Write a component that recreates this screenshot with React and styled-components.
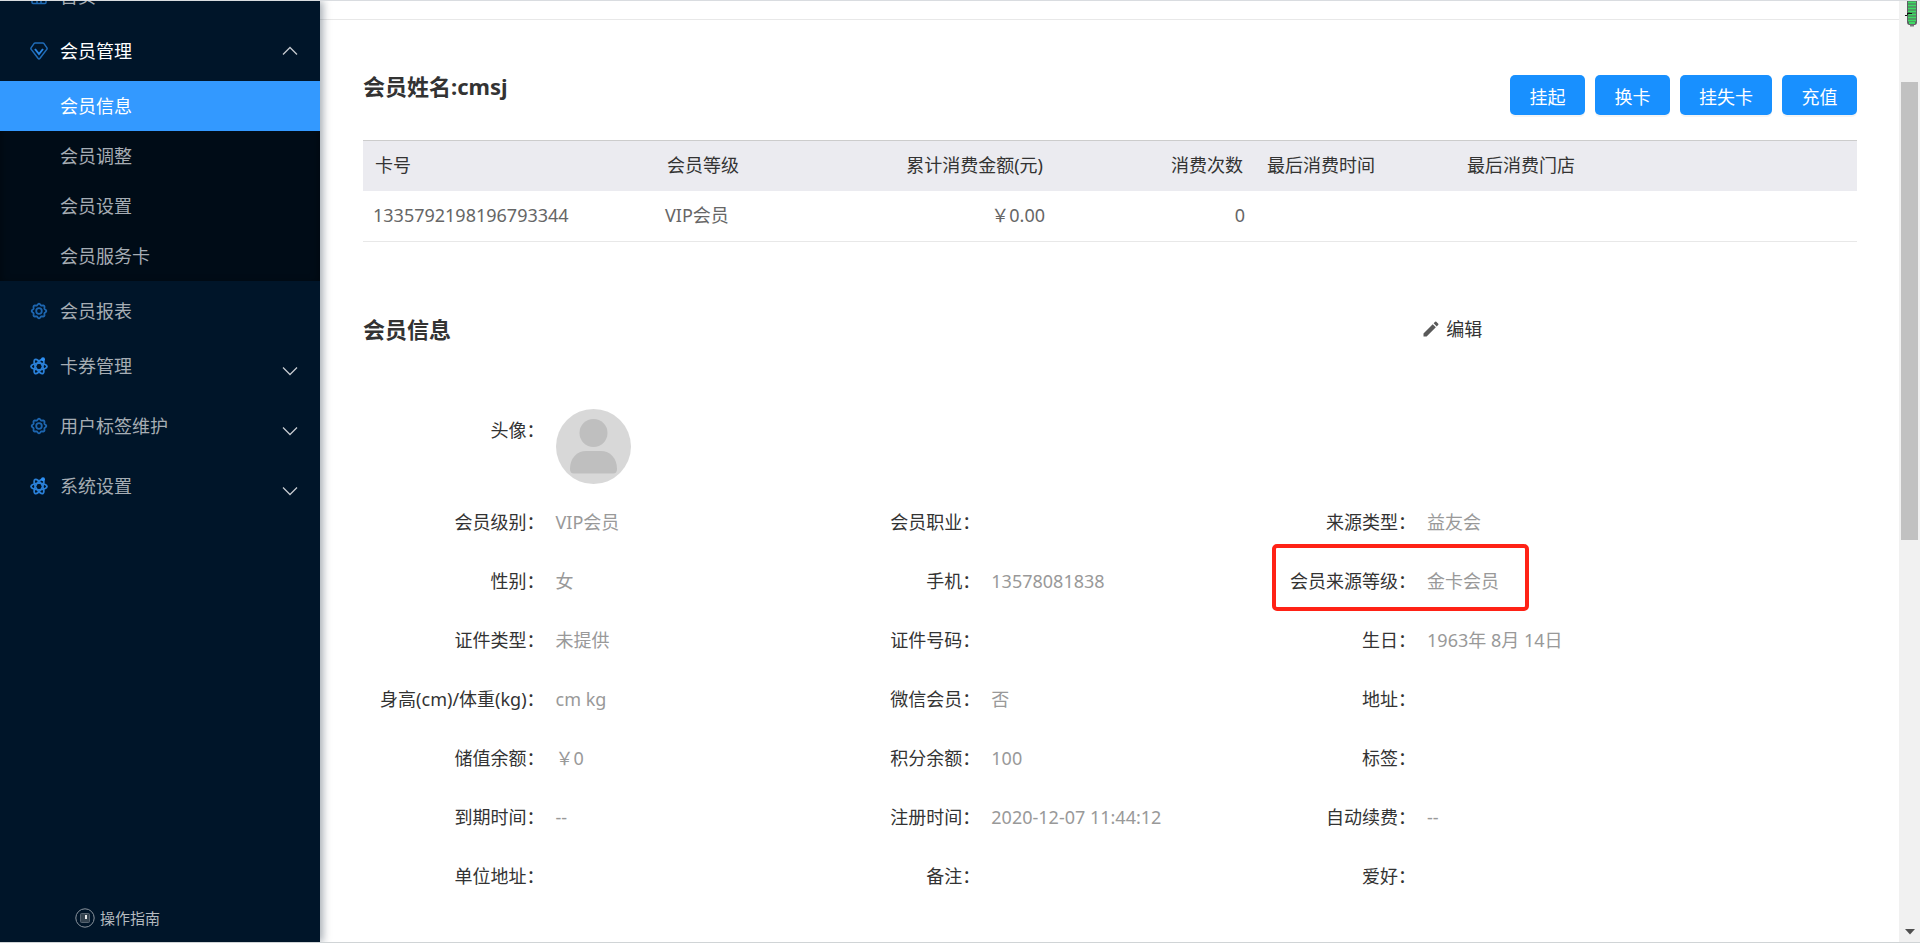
import React from "react";
import styled, { createGlobalStyle } from "styled-components";
import { MdEdit } from "react-icons/md";

const subMenu = ["会员信息", "会员调整", "会员设置", "会员服务卡"];

const cards = [
  {
    no: "1335792198196793344",
    level: "VIP会员",
    amount: "￥0.00",
    count: "0",
    time: "",
    store: "",
  },
];

const memberInfo = [
  { label: "会员级别", value: "VIP会员" },
  { label: "会员职业", value: "" },
  { label: "来源类型", value: "益友会" },
  { label: "性别", value: "女" },
  { label: "手机", value: "13578081838" },
  { label: "会员来源等级", value: "金卡会员", marked: true },
  { label: "证件类型", value: "未提供" },
  { label: "证件号码", value: "" },
  { label: "生日", value: "1963年 8月 14日" },
  { label: "身高(cm)/体重(kg)", value: "cm kg" },
  { label: "微信会员", value: "否" },
  { label: "地址", value: "" },
  { label: "储值余额", value: "￥0" },
  { label: "积分余额", value: "100" },
  { label: "标签", value: "" },
  { label: "到期时间", value: "--" },
  { label: "注册时间", value: "2020-12-07 11:44:12" },
  { label: "自动续费", value: "--" },
  { label: "单位地址", value: "" },
  { label: "备注", value: "" },
  { label: "爱好", value: "" },
];

// scalloped outline with eight lobes
const gearPath = () => {
  const points = [];
  for (let i = 0; i < 96; i++) {
    const a = (i / 96) * Math.PI * 2;
    const r = 6.6 + 0.7 * Math.cos(a * 8);
    points.push(
      `${(9 + r * Math.cos(a)).toFixed(2)} ${(9 + r * Math.sin(a)).toFixed(2)}`
    );
  }
  return `M${points.join("L")}Z`;
};

const HomeIcon = () => (
  <MenuIcon viewBox="0 0 18 18" $color="#1f6cb8">
    <path d="M2 8L9 2l7 6v7.5a1 1 0 0 1-1 1H3a1 1 0 0 1-1-1z" />
    <path d="M7 16v-5h4v5" />
  </MenuIcon>
);

const DiamondIcon = () => (
  <MenuIcon viewBox="0 0 18 18" $color="#1f6cb8">
    <path d="M5.2 1h7.6q.7 0 1.2.6l2.8 4q.6.9 0 1.8L10 16.3q-1 1.2-2 0L1.2 7.4q-.6-.9 0-1.8l2.8-4Q4.5 1 5.2 1z" />
    <path d="M5 7l4 5 4-5" stroke="#2a86e2" strokeWidth="2" />
  </MenuIcon>
);

const GearIcon = () => (
  <MenuIcon viewBox="0 0 18 18" $color="#1d66b0" $bold>
    <path d={gearPath()} />
    <circle cx="9" cy="9" r="2.8" />
  </MenuIcon>
);

const AtomIcon = () => (
  <MenuIcon viewBox="0 0 18 18" $color="#2a80d8" $bold>
    <ellipse cx="9" cy="9.5" rx="8" ry="3.2" />
    <ellipse cx="9" cy="9.5" rx="8" ry="3.2" transform="rotate(60 9 9.5)" />
    <ellipse cx="9" cy="9.5" rx="8" ry="3.2" transform="rotate(120 9 9.5)" />
    <circle cx="9" cy="9.5" r="2.4" fill="#001529" stroke="none" />
    <circle cx="13" cy="2.2" r="2" fill="#2e90f5" stroke="none" />
  </MenuIcon>
);

const Chevron = ({ open }) => (
  <ChevronIcon viewBox="0 0 16 10" $open={open}>
    <path d={open ? "M1 8.5l7-7 7 7" : "M1 1.5l7 7 7-7"} />
  </ChevronIcon>
);

const GuideIcon = () => (
  <GuideSvg viewBox="0 0 20 20">
    <circle cx="10" cy="10" r="9.2" fill="none" stroke="#8b949d" />
    <rect x="5.5" y="5.5" width="9" height="9" rx="1" fill="#33424f" stroke="#566370" />
    <rect x="10" y="7" width="2" height="4" fill="#e8eaec" />
  </GuideSvg>
);

const BatteryWidget = () => (
  <BatterySvg viewBox="0 0 14 28">
    <path d="M3 0h10v21q0 3-2.5 3h-5Q3 24 3 21z" fill="#5d5f63" />
    <path
      d="M4 1.5h8M4 4.5h8M4 7.5h8M4 10.5h8M4 13.5h8M4 16.5h8M4 19.5h8M5 22h6"
      stroke="#3ddc63"
      strokeWidth="1.8"
    />
    <path d="M6 24.5h4" stroke="#77797c" strokeWidth="2" />
    <path d="M1 14.5h2l2-3M3 12.5h5" stroke="#111" fill="none" />
  </BatterySvg>
);

export default function App() {
  return (
    <Layout>
      <GlobalStyle />
      <Sidebar>
        <Menu>
          <MenuItem href="#home">
            <HomeIcon />
            首页
          </MenuItem>
          <MenuItem href="#member" $tall $current>
            <DiamondIcon />
            会员管理
            <Chevron open />
          </MenuItem>
          <SubMenu>
            {subMenu.map((name, i) => (
              <SubItem href="#member" key={name} $active={i === 0}>
                {name}
              </SubItem>
            ))}
          </SubMenu>
          <MenuItem href="#report" $spaced>
            <GearIcon />
            会员报表
          </MenuItem>
          <MenuItem href="#coupon" $tall>
            <AtomIcon />
            卡券管理
            <Chevron />
          </MenuItem>
          <MenuItem href="#tags" $tall>
            <GearIcon />
            用户标签维护
            <Chevron />
          </MenuItem>
          <MenuItem href="#settings" $tall>
            <AtomIcon />
            系统设置
            <Chevron />
          </MenuItem>
        </Menu>
        <GuideLink href="#guide">
          <GuideIcon />
          操作指南
        </GuideLink>
      </Sidebar>

      <Main>
        <TopBar />
        <Content>
          <TitleRow>
            <Title>会员姓名:cmsj</Title>
            <Actions>
              <ActionButton type="button">挂起</ActionButton>
              <ActionButton type="button">换卡</ActionButton>
              <ActionButton type="button">挂失卡</ActionButton>
              <ActionButton type="button">充值</ActionButton>
            </Actions>
          </TitleRow>

          <CardTable>
            <colgroup>
              <col className="no" />
              <col className="fixed" />
              <col className="fixed" />
              <col className="fixed" />
              <col className="fixed" />
              <col />
            </colgroup>
            <thead>
              <tr>
                <Th>卡号</Th>
                <Th>会员等级</Th>
                <Th $right>累计消费金额(元)</Th>
                <Th $right>消费次数</Th>
                <Th>最后消费时间</Th>
                <Th>最后消费门店</Th>
              </tr>
            </thead>
            <tbody>
              {cards.map((card) => (
                <tr key={card.no}>
                  <Td>{card.no}</Td>
                  <Td>{card.level}</Td>
                  <Td $right>{card.amount}</Td>
                  <Td $right>{card.count}</Td>
                  <Td>{card.time}</Td>
                  <Td>{card.store}</Td>
                </tr>
              ))}
            </tbody>
          </CardTable>

          <SectionHead>
            <Title>会员信息</Title>
            <EditButton type="button">
              <MdEdit size={20} color="#595959" />
              编辑
            </EditButton>
          </SectionHead>

          <InfoGrid>
            <AvatarField>
              <Label>头像：</Label>
              <Avatar viewBox="0 0 75 75">
                <circle cx="37.5" cy="37.5" r="37.5" fill="#d8d8d8" />
                <circle cx="37.5" cy="24" r="14" fill="#bfbfbf" />
                <path
                  d="M14 60C14 49 21 42 30 42h15c9 0 16 7 16 18q0 4.5-4 4.5H18q-4 0-4-4.5z"
                  fill="#bfbfbf"
                />
              </Avatar>
            </AvatarField>
            {memberInfo.map((item) => (
              <Field key={item.label}>
                <Label>{item.label}：</Label>
                <Value>{item.value}</Value>
                {item.marked && <Mark />}
              </Field>
            ))}
          </InfoGrid>
        </Content>
      </Main>

      <ScrollTrack>
        <ScrollThumb />
        <ScrollArrow viewBox="0 0 10 6">
          <path d="M0 0h10L5 5.5z" fill="#505050" />
        </ScrollArrow>
        <BatteryWidget />
      </ScrollTrack>
    </Layout>
  );
}

const GlobalStyle = createGlobalStyle`
  * {
    box-sizing: border-box;
  }
  body {
    margin: 0;
    font-family: "Noto Sans", "Noto Sans CJK SC", sans-serif;
    font-size: 18px;
    line-height: 26px;
    color: #333;
    background: #fff;
  }
  a {
    text-decoration: none;
  }
  button {
    font: inherit;
    border: 0;
    cursor: pointer;
  }
`;

const Layout = styled.div`
  display: flex;
  height: 100vh;
  overflow: hidden;
  border-top: 1px solid #d9dce0;
  border-bottom: 1px solid #d0d4d6;
`;

const Sidebar = styled.aside`
  position: relative;
  z-index: 1;
  display: flex;
  flex-direction: column;
  justify-content: space-between;
  flex: 0 0 320px;
  background: #001529;
  box-shadow: 3px 0 8px rgba(0, 21, 41, 0.35);
`;

/* the menu is scrolled a little, so the first entry is mostly hidden */
const Menu = styled.nav`
  margin-top: -30px;
`;

const MenuItem = styled.a`
  display: flex;
  align-items: center;
  height: ${(props) => (props.$tall ? "60px" : "50px")};
  margin: ${(props) => (props.$spaced ? "5px 0 0" : "0")};
  padding: 0 22px 0 30px;
  color: ${(props) => (props.$current ? "#fff" : "#a6adb4")};
`;

const MenuIcon = styled.svg`
  width: 18px;
  height: 18px;
  margin-right: 12px;
  fill: none;
  stroke: ${(props) => props.$color};
  stroke-width: ${(props) => (props.$bold ? 1.8 : 1.5)};
`;

const ChevronIcon = styled.svg`
  width: 16px;
  height: 10px;
  margin-left: auto;
  margin-top: ${(props) => (props.$open ? "0" : "10px")};
  fill: none;
  stroke: #c4c9ce;
  stroke-width: 1.3;
`;

const SubMenu = styled.div`
  background: #000c17;
  box-shadow: inset 0 3px 10px rgba(0, 0, 0, 0.45);
`;

const SubItem = styled.a`
  display: flex;
  align-items: center;
  height: 50px;
  padding-left: 60px;
  color: ${(props) => (props.$active ? "#fff" : "#a6adb4")};
  background: ${(props) => (props.$active ? "#3399ff" : "transparent")};
`;

const GuideLink = styled.a`
  display: flex;
  align-items: center;
  gap: 5px;
  padding: 0 0 11px 75px;
  font-size: 15px;
  color: #b4babf;
`;

const GuideSvg = styled.svg`
  width: 20px;
  height: 20px;
`;

const Main = styled.main`
  flex: 1;
  min-width: 0;
`;

const TopBar = styled.div`
  height: 19px;
  border-bottom: 1px solid #e8e8e8;
`;

const Content = styled.div`
  padding: 55px 42px 0 43px;
`;

const TitleRow = styled.div`
  display: flex;
  justify-content: space-between;
  align-items: flex-start;
  margin-bottom: 25px;
`;

const Title = styled.h2`
  margin: 0;
  font-size: 22px;
  line-height: 22px;
  font-weight: 700;
`;

const Actions = styled.div`
  display: flex;
  gap: 10px;
`;

const ActionButton = styled.button`
  height: 40px;
  min-width: 75px;
  padding: 4px 19px 0;
  color: #fff;
  background: #1890ff;
  border-radius: 5px;
  box-shadow: 0 2px 0 rgba(0, 0, 0, 0.045);
`;

const CardTable = styled.table`
  width: 100%;
  table-layout: fixed;
  border-collapse: separate;
  border-spacing: 0;
  .no {
    width: 292px;
  }
  .fixed {
    width: 200px;
  }
`;

const Th = styled.th`
  height: 51px;
  padding: 0 12px 2px;
  font-weight: inherit;
  text-align: ${(props) => (props.$right ? "right" : "left")};
  background: #ebebf0;
  border-top: 1px solid #ccc;
`;

const Td = styled.td`
  height: 51px;
  padding: 0 10px 2px;
  color: #666;
  text-align: ${(props) => (props.$right ? "right" : "left")};
  border-bottom: 1px solid #e8e8e8;
`;

const SectionHead = styled.div`
  display: grid;
  grid-template-columns: 17fr 7fr;
  align-items: center;
  margin: 74px 0 67px;
`;

const EditButton = styled.button`
  display: flex;
  align-items: center;
  justify-self: start;
  gap: 5px;
  padding: 0;
  color: #333;
  background: none;
`;

const InfoGrid = styled.div`
  display: grid;
  grid-template-columns: repeat(3, 1fr);
  width: 87.5%;
`;

const Field = styled.div`
  position: relative;
  display: grid;
  grid-template-columns: 5fr 7fr;
  align-items: center;
  height: 59px;
`;

const Label = styled.span`
  text-align: right;
  white-space: nowrap;
`;

const Value = styled.span`
  padding-left: 11px;
  color: #999;
  white-space: nowrap;
`;

/* spans the whole grid, its label is as wide as the ones below */
const AvatarField = styled(Field)`
  grid-column: 1 / -1;
  grid-template-columns: 5fr 31fr;
  align-items: start;
  height: 83px;
  ${Label} {
    padding-top: 8px;
  }
`;

const Avatar = styled.svg`
  width: 75px;
  height: 75px;
  margin-left: 11px;
`;

/* hand drawn highlight over the field */
const Mark = styled.div`
  position: absolute;
  top: -7px;
  bottom: -1px;
  left: 37px;
  width: 257px;
  border: 4px solid #ff2216;
  border-radius: 5px;
`;

const ScrollTrack = styled.div`
  position: relative;
  display: flex;
  flex-direction: column;
  flex: 0 0 21px;
  padding: 81px 2px 7px;
  background: #f1f1f1;
`;

const ScrollThumb = styled.div`
  height: 458px;
  background: #c1c1c1;
`;

const ScrollArrow = styled.svg`
  width: 10px;
  height: 6px;
  margin: auto auto 0;
`;

const BatterySvg = styled.svg`
  position: absolute;
  top: 0;
  left: 5px;
  width: 14px;
  height: 28px;
`;
